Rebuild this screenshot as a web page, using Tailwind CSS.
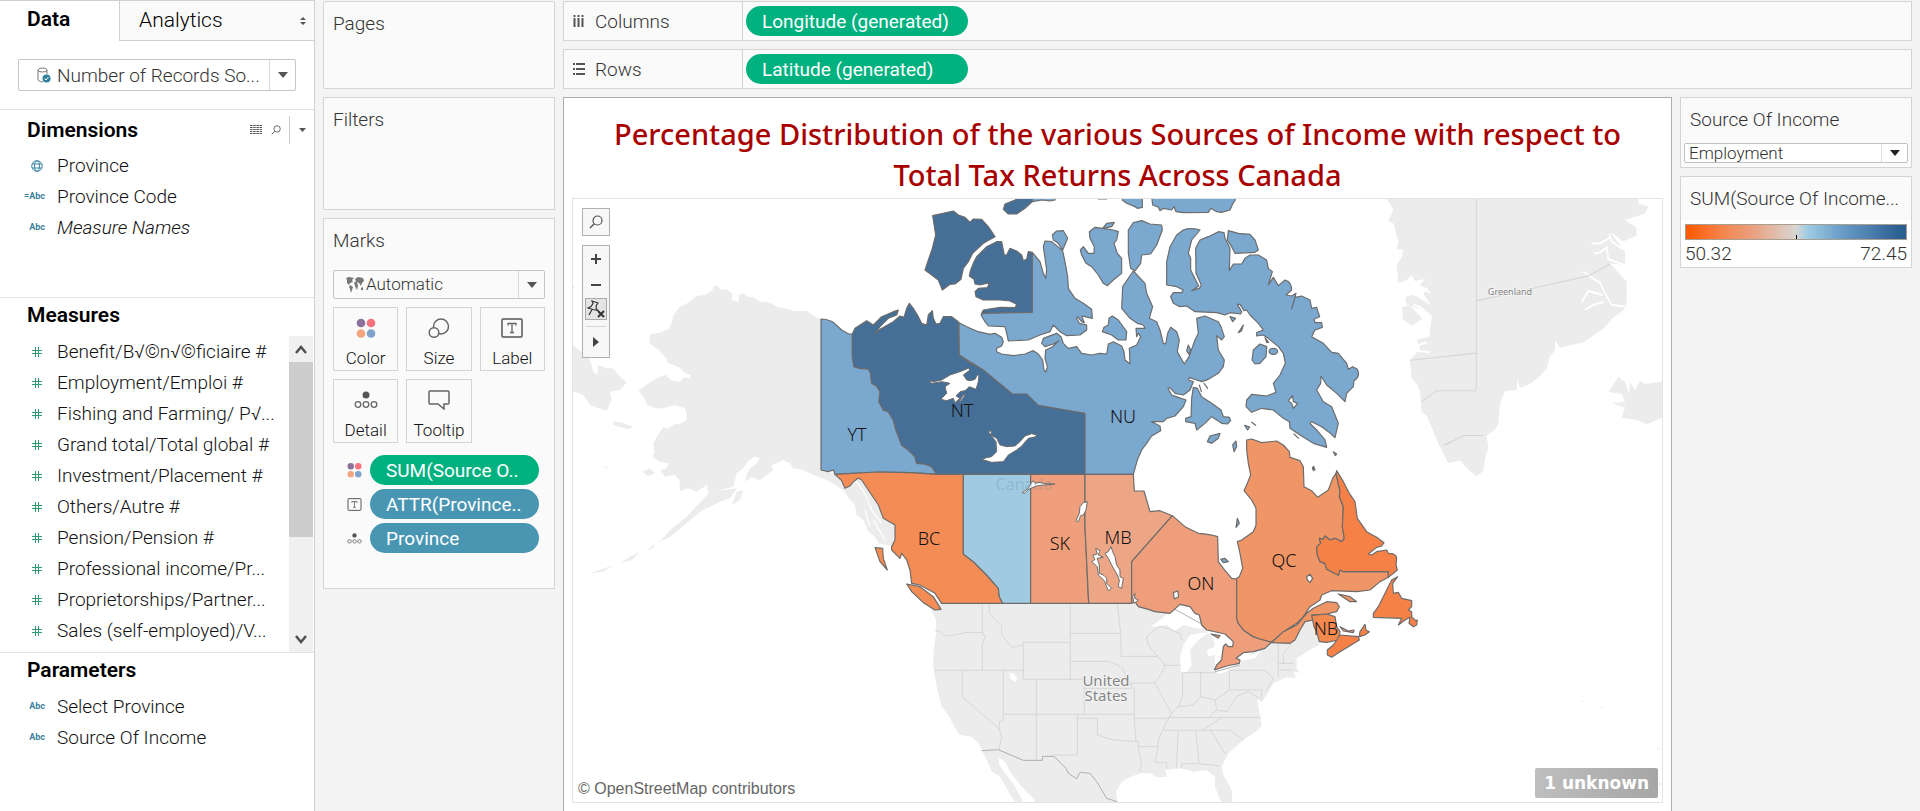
<!DOCTYPE html>
<html lang="en">
<head>
<meta charset="utf-8">
<title>Income sources by province</title>
<script src="https://cdn.jsdelivr.net/npm/@tailwindcss/browser@4"></script>
</head>
<body class="bg-[#f4f4f4] font-['Roboto',sans-serif] text-[19px] leading-[27px] font-light text-[#111]">
<svg class="hidden" aria-hidden="true">
  <symbol id="hash" viewBox="0 0 10 10"><path d="M3.5 0V10M6.5 0V10M0 3.5H10M0 6.5H10" fill="none" stroke="#2f9a72" stroke-width="1"/></symbol>
  <symbol id="dots4" viewBox="0 0 20 20"><circle cx="5" cy="5" r="4.3" fill="#8a7199"/><circle cx="15" cy="5" r="4.3" fill="#f7727f"/><circle cx="5" cy="15.500" r="4.300" fill="#f2a57c"/><circle cx="15" cy="15.500" r="4.300" fill="#7fa3cc"/></symbol>
  <symbol id="label" viewBox="0 0 22 20"><rect x="1" y="1" width="20" height="18" rx="1" fill="none" stroke="#555" stroke-width="1.500"/><path d="M7 7.500V5.500H15V7.500M11 5.500V14.500M9 14.500H13" fill="none" stroke="#666" stroke-width="1.300"/></symbol>
  <symbol id="detail" viewBox="0 0 24 18"><circle cx="12" cy="4" r="3.500" fill="#555"/><g fill="none" stroke="#666" stroke-width="1.300"><circle cx="4" cy="13.500" r="2.800"/><circle cx="12" cy="13.500" r="2.800"/><circle cx="20" cy="13.500" r="2.800"/></g></symbol>
  <symbol id="lens" viewBox="0 0 14 14"><circle cx="8.500" cy="5.500" r="4.500" fill="none" stroke="#555" stroke-width="1.200"/><path d="M5.300 8.700L1 13" stroke="#555" stroke-width="1.400"/></symbol>
</svg>
<div class="flex h-screen overflow-hidden">

  <aside class="flex w-[315px] shrink-0 flex-col border-r border-[#d0d0d0] bg-white">
    <div class="flex h-[41px] shrink-0">
      <button class="w-[119px] border-t border-[#d0d0d0] pb-1 pl-[27px] text-left text-[21px] font-semibold text-black">Data</button>
      <button class="flex flex-1 items-center border border-r-0 border-[#d0d0d0] bg-[#fafafa] pr-2 pl-[19px] text-left text-[21px] font-light text-black"><span class="flex-1">Analytics</span>
        <svg class="h-2 w-[6px]" viewBox="0 0 6 8"><path d="M0 3L3 0L6 3ZM0 5L3 8L6 5Z" fill="#555"/></svg></button>
    </div>
    <div class="flex h-[69px] shrink-0 items-start border-b border-[#e2e2e2] px-[18px] pt-[18px]">
      <button class="flex h-8 w-full items-center rounded-xs border border-[#c6c6c6] text-[#333]">
        <svg class="ml-[18px] h-4 w-[14px] shrink-0" viewBox="0 0 14 16"><path d="M1 3V13Q3 15 6 15M10 3V7M1 3A4.500 2 0 0 1 10 3A4.500 2 0 0 1 1 3" fill="none" stroke="#777"/><circle cx="9.500" cy="11.500" r="4" fill="#2f7f9f"/><path d="M7.500 11.500L9 13L11.500 10" fill="none" stroke="#fff"/></svg>
        <span class="ml-[6px] flex-1 text-left whitespace-nowrap">Number of Records So...</span>
        <span class="flex h-full w-[26px] items-center justify-center border-l border-[#d8d8d8]"><svg class="h-[6px] w-[10px]" viewBox="0 0 10 6"><path d="M0 0H10L5 6Z" fill="#555"/></svg></span>
      </button>
    </div>
    <section class="h-[188px] shrink-0 border-b border-[#e2e2e2]">
      <div class="flex h-[40px] items-center pl-[27px]">
        <h2 class="flex-1 text-[21px] font-semibold text-black">Dimensions</h2>
        <button class="mr-[9px]" aria-label="View as table"><svg class="block h-[10px] w-3" viewBox="0 0 12 10"><path d="M0 .5H12M0 2.500H12M0 4.500H12M0 6.500H12M0 8.500H12" stroke="#555" stroke-dasharray="2.500 .7"/></svg></button>
        <button class="mr-2" aria-label="Search"><svg class="block h-[10px] w-[10px]"><use href="#lens"/></svg></button>
        <button class="flex h-7 w-[25px] items-center justify-center border-l border-[#ccc]" aria-label="Menu"><svg class="h-1 w-[7px]" viewBox="0 0 7 4"><path d="M0 0H7L3.500 4Z" fill="#555"/></svg></button>
      </div>
      <ul>
        <li class="flex h-[31px] items-center"><span class="flex w-[57px] justify-center pl-4"><svg class="h-3 w-3" viewBox="0 0 12 12"><g fill="none" stroke="#3c87a6"><circle cx="6" cy="6" r="5.300"/><ellipse cx="6" cy="6" rx="2.500" ry="5.300"/><path d="M1 4H11M1 8H11"/></g></svg></span>Province</li>
        <li class="flex h-[31px] items-center"><span class="w-[57px] pr-3 text-right text-[9px] font-bold text-[#3c7f9c]">=Abc</span>Province Code</li>
        <li class="flex h-[31px] items-center"><span class="w-[57px] pr-3 text-right text-[9px] font-bold text-[#3c7f9c]">Abc</span><i>Measure Names</i></li>
      </ul>
    </section>
    <section class="flex h-[355px] shrink-0 flex-col border-b border-[#e2e2e2]">
      <h2 class="h-[38px] shrink-0 pt-1 pl-[27px] text-[21px] font-semibold text-black">Measures</h2>
      <div class="flex flex-1">
        <ul class="flex-1 whitespace-nowrap">
          <li class="flex h-[31px] items-center"><svg class="mr-[15px] ml-8 h-[10px] w-[10px]"><use href="#hash"/></svg>Benefit/B√©n√©ficiaire #</li>
          <li class="flex h-[31px] items-center"><svg class="mr-[15px] ml-8 h-[10px] w-[10px]"><use href="#hash"/></svg>Employment/Emploi #</li>
          <li class="flex h-[31px] items-center"><svg class="mr-[15px] ml-8 h-[10px] w-[10px]"><use href="#hash"/></svg>Fishing and Farming/ P√...</li>
          <li class="flex h-[31px] items-center"><svg class="mr-[15px] ml-8 h-[10px] w-[10px]"><use href="#hash"/></svg>Grand total/Total global #</li>
          <li class="flex h-[31px] items-center"><svg class="mr-[15px] ml-8 h-[10px] w-[10px]"><use href="#hash"/></svg>Investment/Placement #</li>
          <li class="flex h-[31px] items-center"><svg class="mr-[15px] ml-8 h-[10px] w-[10px]"><use href="#hash"/></svg>Others/Autre #</li>
          <li class="flex h-[31px] items-center"><svg class="mr-[15px] ml-8 h-[10px] w-[10px]"><use href="#hash"/></svg>Pension/Pension #</li>
          <li class="flex h-[31px] items-center"><svg class="mr-[15px] ml-8 h-[10px] w-[10px]"><use href="#hash"/></svg>Professional income/Pr...</li>
          <li class="flex h-[31px] items-center"><svg class="mr-[15px] ml-8 h-[10px] w-[10px]"><use href="#hash"/></svg>Proprietorships/Partner...</li>
          <li class="flex h-[31px] items-center"><svg class="mr-[15px] ml-8 h-[10px] w-[10px]"><use href="#hash"/></svg>Sales (self-employed)/V...</li>
        </ul>
        <div class="mr-[1px] flex w-6 flex-col items-center bg-[#f0f0f0]">
          <button class="flex h-[26px] shrink-0 items-center" aria-label="Scroll up"><svg class="h-[9px] w-3" viewBox="0 0 12 9"><path d="M1 8L6 2L11 8" fill="none" stroke="#505050" stroke-width="2.500"/></svg></button>
          <div class="h-[175px] w-full bg-[#cdcdcd]"></div>
          <button class="mt-auto flex h-[26px] shrink-0 items-center" aria-label="Scroll down"><svg class="h-[9px] w-3" viewBox="0 0 12 9"><path d="M1 1L6 7L11 1" fill="none" stroke="#505050" stroke-width="2.500"/></svg></button>
        </div>
      </div>
    </section>
    <section>
      <h2 class="h-[38px] pt-1 pl-[27px] text-[21px] font-semibold text-black">Parameters</h2>
      <ul>
        <li class="flex h-[31px] items-center"><span class="w-[57px] pr-3 text-right text-[9px] font-bold text-[#3c7f9c]">Abc</span>Select Province</li>
        <li class="flex h-[31px] items-center"><span class="w-[57px] pr-3 text-right text-[9px] font-bold text-[#3c7f9c]">Abc</span>Source Of Income</li>
      </ul>
    </section>
  </aside>

  <div class="flex w-[248px] shrink-0 flex-col gap-2 px-2 pt-[1px] text-[#333]">
    <section class="h-[88px] rounded-xs border border-[#d4d4d4] bg-[#fafafa] px-[9px] pt-2">Pages</section>
    <section class="h-[113px] border border-[#d4d4d4] bg-[#fafafa] px-[9px] pt-2">Filters</section>
    <section class="h-[371px] border border-[#d4d4d4] bg-[#fafafa] px-[9px] pt-2">
      <h2>Marks</h2>
      <button class="mt-4 flex h-[29px] w-full items-center rounded-xs border border-[#c6c6c6] text-[17px]">
        <svg class="mr-[2px] ml-3 h-4 w-[18px]" viewBox="0 0 18 16"><path d="M0 1L3 0L8 1L6 3L7 5L4 6L3 8L1 6L1 3ZM4 8L7 10L6 13L5 16L4 12L3 10ZM9 2L12 0L17 1L18 4L16 6L15 9L13 6L11 5L12 9L11 13L9 9L8 6L10 4ZM15 11L17 10L17 13L15 13Z" fill="#777"/></svg>
        <span class="flex-1 text-left">Automatic</span>
        <span class="flex h-full w-[26px] items-center justify-center border-l border-[#d8d8d8]"><svg class="h-[6px] w-[10px]" viewBox="0 0 10 6"><path d="M0 0H10L5 6Z" fill="#555"/></svg></span>
      </button>
      <div class="mt-2 grid grid-cols-3 gap-2 text-[17px] text-[#111]">
        <button class="flex h-16 flex-col items-center border border-[#d4d4d4] pt-[10px]"><svg class="h-5 w-5 shrink-0"><use href="#dots4"/></svg><span class="mt-2 leading-6">Color</span></button>
        <button class="flex h-16 flex-col items-center border border-[#d4d4d4] pt-[10px]"><svg class="h-5 w-[22px] shrink-0" viewBox="0 0 22 20"><g fill="#fafafa" stroke="#666" stroke-width="1.500"><circle cx="13" cy="8.500" r="7.500"/><circle cx="6" cy="14.500" r="4.800"/></g></svg><span class="mt-2 leading-6">Size</span></button>
        <button class="flex h-16 flex-col items-center border border-[#d4d4d4] pt-[10px]"><svg class="h-5 w-[22px] shrink-0"><use href="#label"/></svg><span class="mt-2 leading-6">Label</span></button>
        <button class="flex h-16 flex-col items-center border border-[#d4d4d4] pt-[10px]"><svg class="h-5 w-6 shrink-0"><use href="#detail"/></svg><span class="mt-2 leading-6">Detail</span></button>
        <button class="flex h-16 flex-col items-center border border-[#d4d4d4] pt-[10px]"><svg class="h-5 w-[22px] shrink-0" viewBox="0 0 22 20"><path d="M2 1H20Q21 1 21 2V13Q21 14 20 14H16V19L10 14H2Q1 14 1 13V2Q1 1 2 1Z" fill="none" stroke="#666" stroke-width="1.500"/></svg><span class="mt-2 leading-6">Tooltip</span></button>
      </div>
      <ul class="mt-3 flex flex-col gap-1 pr-[6px] pl-[14px] font-normal text-white">
        <li class="flex items-center gap-2"><svg class="h-4 w-[15px]"><use href="#dots4"/></svg><button class="h-[30px] flex-1 rounded-full bg-[#00b180] pl-4 text-left">SUM(Source O..</button></li>
        <li class="flex items-center gap-2"><svg class="h-[13px] w-[15px]"><use href="#label"/></svg><button class="h-[30px] flex-1 rounded-full bg-[#4996b2] pl-4 text-left">ATTR(Province..</button></li>
        <li class="flex items-center gap-2"><svg class="h-[13px] w-[15px]"><use href="#detail"/></svg><button class="h-[30px] flex-1 rounded-full bg-[#4996b2] pl-4 text-left">Province</button></li>
      </ul>
    </section>
  </div>

  <main class="flex min-w-0 flex-1 flex-col gap-2 pt-[1px] pr-2">
    <div class="flex h-10 shrink-0 border border-[#d4d4d4] bg-[#fafafa] text-[#333]">
      <div class="flex w-[179px] items-center border-r border-[#d4d4d4] pl-[9px]"><svg class="mr-[11px] h-3 w-[11px]" viewBox="0 0 11 12"><path d="M1.500 3V12M5.500 3V12M9.500 3V12M1.500 0V2M5.500 0V2M9.500 0V2" stroke="#555" stroke-width="2"/></svg>Columns</div>
      <button class="mt-1 ml-[3px] h-[30px] w-[222px] rounded-full bg-[#00b180] pl-4 text-left font-normal text-white">Longitude (generated)</button>
    </div>
    <div class="flex h-10 shrink-0 border border-[#d4d4d4] bg-[#fafafa] text-[#333]">
      <div class="flex w-[179px] items-center border-r border-[#d4d4d4] pl-[9px]"><svg class="mr-[10px] h-3 w-3" viewBox="0 0 12 12"><path d="M3 1H12M3 6H12M3 11H12M0 1H2M0 6H2M0 11H2" stroke="#555" stroke-width="2"/></svg>Rows</div>
      <button class="mt-1 ml-[3px] h-[30px] w-[222px] rounded-full bg-[#00b180] pl-4 text-left font-normal text-white">Latitude (generated)</button>
    </div>

    <div class="flex min-h-0 flex-1 gap-2">
      <section class="flex min-w-0 flex-1 flex-col border border-b-0 border-[#adadad] bg-white px-2 pb-2">
        <h1 class="px-8 pt-[15px] pb-[3px] text-center font-['Noto_Sans',sans-serif] text-[29px] leading-[41px] font-medium text-[#a80000]">Percentage Distribution of the various Sources of Income with respect to Total Tax Returns Across Canada</h1>
        <div class="relative min-h-0 flex-1 overflow-hidden border border-[#e3e3e3]">
          <svg class="absolute inset-0 h-full w-full" viewBox="573 199 1089 603" preserveAspectRatio="xMidYMid slice" role="img" aria-label="Map of Canada coloured by province">
            <!-- Uncoloured base land -->
            <g fill="#ececec">
              <g transform="translate(560 190) scale(.33333)">
                <path d="M783 387L765 380 740 362 715 364 700 362 680 357 650 350 630 338 600 335 580 322 560 320 552 308 538 316 535 335 515 330 518 312 500 298 485 300 466 284 455 303 435 315 410 317 385 338 360 350 340 375 335 400 325 418 300 428 270 432 268 460 300 483 318 505 325 520 355 530 375 548 392 555 390 565 370 563 360 575 335 572 318 555 300 560 265 580 236 602 250 620 262 645 285 655 310 655 345 645 375 655 380 670 380 690 365 700 345 702 325 715 310 712 290 740 280 760 283 790 275 800 300 815 325 820 320 835 300 840 315 860 345 855 358 870 360 903 385 895 410 905 440 885 450 925 480 900 520 890 530 850 550 835 565 812 585 800 600 805 590 820 570 835 560 855 555 875 575 862 600 870 620 855 640 840 635 825 650 820 670 810 690 820 700 835 730 840 760 855 800 870 850 900 870 930 885 945 890 975 910 990 925 1025 945 1040 955 1060 980 1065 1005 1070 1010 1010 970 985 930 900 895 860 830 853 783 840Z"/>
                <path d="M38 465L70 490 90 510 100 545 112 555 115 525 140 535 160 535 180 560 200 577 180 600 150 605 155 630 140 662 115 655 90 645 70 615 45 605 38 608ZM160 695L185 697 220 712 200 717 160 705ZM247 845L270 835 285 850 265 858ZM38 285L44 292 38 300ZM135 825L145 835 138 835Z"/>
                <path d="M450 905L530 895 510 925 480 935 420 965 380 1000 330 1040 300 1055 330 1020 380 980ZM530 905L550 900 540 930 515 945ZM260 1080L285 1062 280 1075ZM180 1120L210 1100 240 1085 215 1110ZM85 1150L120 1140 160 1125 130 1145Z"/>
                <path d="M885 870L915 910 935 960 965 1000M915 960L930 1010M940 990L975 1050" fill="none" stroke="#fff" stroke-width="4"/>
              </g>
              <path transform="translate(900 590) scale(.33333)" d="M92 55L108 90 108 130 100 190 100 235 112 300 125 350 145 375 160 405 180 435 215 440 235 460 245 480 265 520 275 545 300 560 345 637 370 637 345 590 320 555 297 525 297 503 315 515 330 545 365 590 405 630 400 640 652 640 648 605 665 575 690 562 720 550 750 550 770 562 800 560 795 540 840 535 880 545 920 540 945 560 945 590 965 640 998 640 995 600 970 555 965 530 985 490 1030 450 1075 420 1085 405 1080 375 1075 345 1090 330 1100 315 1120 280 1160 262 1188 265 1180 245 1200 248 1190 235 1190 205 1220 185 1258 165 1250 80 1170 60 900 20 100 35Z"/>
              <g transform="translate(1370 190) scale(.33333 .396)">
                <path d="M50 22L60 35 70 50 55 78 72 85 75 100 85 130 80 150 100 150 95 170 80 190 85 235 110 228 125 215 135 230 165 225 150 240 175 250 160 262 182 290 130 265 105 270 110 290 150 300 185 320 178 370 140 378 150 400 120 430 125 475 140 490 150 510 155 560 170 570 185 600 205 640 235 690 270 683 300 710 320 722 340 710 345 680 355 650 350 620 375 605 385 590 390 540 405 508 440 505 443 478 450 500 480 490 510 470 530 450 540 420 555 405 555 380 570 398 640 385 700 350 730 322 762 303 770 285 770 232 720 185 765 190 765 155 720 105 760 130 800 115 800 95 765 75 825 60 835 42 805 35 805 22ZM97 295L120 292 158 325 125 343 98 325Z"/>
                <path d="M877 483L850 487 825 490 810 482 795 505 780 485 778 515 765 485 745 472 715 510 755 515 765 535 725 538 765 550 755 575 800 580 830 592 877 575ZM635 1290h6v2h-6ZM690 1305h10v2h-10ZM655 1286h6v2h-6ZM862 1410h8v3h-8ZM868 1498h9v4h-9Z"/>
                <path d="M765 295L725 290 708 265 690 235 660 218 640 207M700 283L670 290 645 302M698 265L655 255 635 283M765 190L715 175 710 145 690 158 672 160M720 120L690 135 665 135M185 320L150 295 130 290M180 260L150 245 125 240M170 385L130 395M180 410L130 405M760 150L725 130 718 110" fill="none" stroke="#fff" stroke-width="5"/>
              </g>
            </g>
            <!-- Lakes cut out of the base land, then state and national borders -->
            <g transform="translate(900 590) scale(.33333)">
              <path fill="#fff" d="M752 110L780 90 810 65 845 43 880 50 905 95 925 118 885 115 850 105 825 122 800 105 775 110ZM905 128L870 135 850 165 840 200 843 245 860 248 875 225 870 180 895 150 925 128ZM905 110L960 125 1000 140 1000 172 970 165 960 210 945 235 945 195 925 200 920 180 945 170 940 145ZM935 240L960 252 1000 235 1022 225 1020 205 960 225ZM1005 205L1020 190 1065 180 1080 185 1065 205 1020 214ZM328 248L340 250 352 265 345 277 330 265ZM1072 330L1080 375 1084 345 1080 325Z"/>
              <path fill="none" stroke="#d3d3d3" stroke-width="2.500" d="M247 42V127L255 140 247 160V241M105 122L120 125 135 138 165 135 195 128 250 127M268 42V70L305 110V135L335 172 370 165M370 157H511M511 42V268M370 157V268H553V373M511 130H663M652 42L662 130 664 200M664 199H773M511 214H625L665 230 690 280 703 300V385L708 455M105 241H370M187 241V320L298 418M310 241V373H703M409 268V510M553 295H695M310 373L308 395H298V418L305 440 297 480M532 373V495H460M532 385H592V435L640 450 715 455M690 280L765 278M703 385H800M715 455L717 490 725 520 718 545M717 470H775M773 199L795 225 785 250 765 278 790 325 815 370 800 395 775 450V470L765 518H800V535M780 108L740 140 745 165 773 199M780 108L840 130 845 150M790 226H840M848 248V320L835 350 815 370M848 248H945M902 248V320M835 350L880 345 902 320 945 330 950 360 925 382M800 383L1082 382M793 421H935M835 421L829 535M887 421L897 518M845 535V521H897L960 528M975 490L932 421H990L1030 450M965 382L912 418M988 241V300H1085V325M988 241H1095L1120 265 1100 300M945 330L988 300M950 360L980 365 1010 320 1045 305 1085 330M1135 160V260M1175 160L1150 190V220M1135 220H1180M1135 240H1180M1115 160L1050 195"/>
              <path fill="none" stroke="#aeaeae" stroke-width="3" d="M245 482L295 479 370 511H427V499H462L498 535 505 550 530 566 540 547 570 550 590 575 605 600 620 625 652 635M825 58L905 102M945 245L1020 225"/>
            </g>
            <path transform="translate(1370 190) scale(.33333 .396)" fill="none" stroke="#d6d6d6" stroke-width="3" d="M319 22V503M319 280L655 217 720 187M120 430L319 412M155 535L200 507H319M222 645L282 620H340"/>

            <g stroke="#6b6b6b" stroke-width="3.500" stroke-linejoin="round">
              <!-- Yukon and Northwest Territories -->
              <g transform="translate(560 190) scale(.33333)">
                <path fill="#7ba8cf" d="M783 387Q805 388 820 397L845 420 866 432H877V500L882 530 900 535 925 537 932 550 935 580 950 588 960 605 957 635 970 660 985 665 1000 690 1008 720 1025 765 1045 780 1065 800 1070 820 1095 822 1115 830 1130 852 1050 848 960 846 880 850 825 853 820 840 805 845 783 840Z"/>
                <path fill="#466f98" d="M877 432L885 415 920 392 940 405 965 380 1000 365 1015 360 1010 375 985 385 960 410 945 432 960 418 1000 395 1020 378 1032 382 1040 355 1048 340 1060 355 1075 380 1085 400 1100 405 1105 375 1117 362 1120 385 1128 402 1140 400 1150 380 1175 380 1195 395 1198 495 1225 515 1270 540 1320 580 1357 610H1400L1435 646 1500 655 1575 670V853H1130L1115 830 1095 822 1070 820 1065 800 1045 780 1025 765 1008 720 1000 690 985 665 970 660 957 635 960 605 950 588 935 580 932 550 925 537 900 535 882 530 877 500Z"/>
              </g>
              <g transform="translate(900 190) scale(.33333)">
                <g fill="#466f98">
                  <path d="M98 77L160 63 175 75 195 82 210 97 220 87 245 88 265 110 285 140 250 160 218 190 205 215 190 235 183 268 165 282 150 283 127 300 115 270 95 255 75 240 85 210 97 175 107 135Z"/>
                  <path d="M290 155L305 155 313 195 320 195 330 175 350 183 365 195 370 212 380 208 385 185 397 187V367L345 369 340 377 335 369 260 370 258 385 245 370 250 360 300 352 345 353 350 343 330 333 300 330 250 330 228 320 225 305 235 295 262 293 268 278 240 285 225 282 222 268 208 258 212 240 222 215 230 200 260 170Z"/>
                  <path d="M397 20V35L375 55 350 72H325L310 58 315 42 345 30 365 20Z"/>
                </g>
                <!-- Nunavut: western islands and the mainland -->
                <g fill="#7ba8cf">
                  <path d="M397 20H465V30L450 33 425 30 397 35ZM667 20V30L680 40 705 50 712 55 727 52V20ZM595 20V27H620V20Z"/>
                  <path d="M397 187L420 215 430 250 437 265 440 240 430 170 435 153 455 155 480 175 488 183 495 215 503 260 505 295 525 325 550 340 575 358 577 385 555 380 545 378 553 398 545 395 532 380 530 385 538 400 560 405V420L540 435 500 437 480 425 460 405 450 425 420 435 385 450 325 453 320 430 315 410 265 408 255 395 243 375 250 370 397 367Z"/>
                  <path d="M457 135L470 123 490 122 503 145 488 180 475 160 460 150Z"/>
                  <path d="M568 125L585 112 608 115 640 120 655 125 650 150 642 160 652 190 665 205V250L640 270 622 287 610 280 595 255 575 230 558 220 545 195 541 180 550 170 565 190 582 190 583 170 570 145ZM608 115L620 100 643 97 635 110Z"/>
                  <path d="M685 120L700 98 725 92 750 102 785 105 787 120 770 165 752 192 725 195 722 220 705 243 692 235 685 190Z"/>
                  <path d="M637 378L655 390 680 425 678 450 655 450 635 435 607 425 612 412 625 405 627 385Z"/>
                  <path d="M177 398L200 410 235 425 270 433 285 430 305 442 310 455 305 468 290 475V485L305 492 340 497 375 492 400 482 415 492 428 510 432 540 438 546 442 530 435 505 437 480 455 472 477 452 460 462 435 470 425 460 430 445 470 430 483 440 490 460 505 475 530 470 545 490 575 495 600 490 620 492 625 462 640 455 665 468 672 485 675 510 690 522 688 475 710 465 722 440 715 430 710 440 708 415 735 415 730 405 712 400 690 385 665 355 668 290 700 243 735 280 740 310 758 350 748 385 770 395 780 420 790 460 797 462 803 430 812 412 830 425 838 450 832 485 853 522 867 500 885 450 895 430 890 385 915 378 955 395 963 410 973 440 965 450 950 437 955 480 973 510 970 530 955 550 925 568 905 575 890 570 868 563 865 570 880 575 870 600 850 615 825 610 810 593 804 595 815 615 835 622 858 630 850 650 825 678 800 685 790 695 755 695 780 708 782 722 755 738 740 760 725 780 712 810 700 853H555V670L415 646 380 612H337L250 540 178 495Z"/>
                </g>
              </g>
              <!-- Nunavut: Baffin Island and its neighbours -->
              <g transform="translate(1150 190) scale(.33333)" fill="#7ba8cf">
                <path d="M5 20L8 45 25 52 30 62 40 55 65 60 72 50 78 65 100 68 175 67 182 55 200 65 215 67 240 60 248 42 256 30 252 20Z"/>
                <path d="M150 120Q120 112 100 120L80 135 60 170 50 215 50 285 80 290 100 300 95 308 70 308 62 320 70 340 90 350 110 348 135 365 200 368 225 375 240 368 272 372 275 365 262 343 270 343 282 362 290 360 300 375 325 400 340 420 320 428V438L340 435 355 445 385 470 400 490 406 520 390 555 370 580 378 607 350 618 305 613 290 630 288 650 305 667 335 655 370 660 400 685 418 695 420 715 450 735 490 760 530 772 525 750 500 720 480 700 485 695 515 710 535 725 555 743 565 700 545 650 520 635 500 600 512 580 513 558 530 585 560 610 585 635 590 610 610 590 612 572Q632 560 622 538L608 530 595 538 590 520 565 490 545 487 520 460 485 440 495 420 517 412 515 398 495 398 492 388 509 380 500 352 485 355 480 330 455 318 435 322 425 357 438 310 425 318 408 315 425 300Q425 275 405 270L385 287 370 262 355 285 367 245 355 235 350 210 325 195 300 195 285 205 275 222 250 222 238 242 240 175 225 145 222 128 205 125 175 140 150 150 137 175 138 250 154 285 148 295 125 302 146 288 122 240V205L115 190 125 150Z"/>
                <path d="M235 122L265 130 300 133 315 150 325 180 315 187 255 190 245 170 232 150ZM130 592L142 595 155 620 185 640 213 660 220 680 238 682 242 692 232 702 215 700 200 690 185 680 165 700 140 720 135 700 107 695V685L123 680 125 625ZM172 755L180 738 210 730 205 745 185 760ZM248 765L258 753 260 770 252 785ZM310 480L330 462 350 470 348 500 330 520 315 522 306 510Z"/>
                <ellipse cx="370" cy="484" rx="13" ry="9"/>
                <path d="M240 380L257 385 248 395ZM265 428L280 405 275 422ZM115 465L122 480 117 493 110 482ZM345 443L356 457 350 457ZM284 706L299 711 293 720ZM305 697L317 706ZM550 785L560 792 556 797ZM432 732L446 745ZM487 836L491 829 495 840ZM148 585L154 605ZM162 580L173 595Z"/>
                <path fill="#fff" d="M415 632L428 617 430 635 443 640 430 655 425 640Z"/>
              </g>
              <!-- British Columbia to Manitoba -->
              <g transform="translate(810 450) scale(.33333)">
                <path fill="#f48c56" d="M75 73L200 66 300 68 380 73H460V312L490 335 530 375 565 415 568 440 578 460H395L375 430 330 405 305 400 300 360 290 330 275 310 270 325 245 300V290L255 270V225L220 205 205 165 185 135 155 90 145 84 130 95 120 108 105 115 95 92ZM290 402L330 410 370 440 393 478 375 480 340 458 305 425ZM195 293L218 295 220 325 232 360 210 335Z"/>
                <path fill="#a0cae2" d="M460 73H662V460H578L568 440 565 415 530 375 490 335 460 312Z"/>
                <path fill="#ef9f7b" d="M662 73H825V230L836 460H662Z"/>
                <path fill="#eca685" d="M825 73H970L973 123H1002L1020 185 1050 182 1087 197 965 335V460H836L825 230Z"/>
              </g>
              <!-- Ontario to the Atlantic -->
              <g transform="translate(1110 430) scale(.33333)">
                <path fill="#ee9e7a" d="M187 257L225 290 265 310Q300 312 323 320L325 395 340 415 365 445 380 447V565L385 580 400 600 430 620 450 627 485 636 465 655 430 665 400 668 378 685 390 690 388 700 350 708 313 720 320 705 335 690 340 650 347 642 355 650 368 650 370 635 345 612 290 600 275 585 268 555 255 550 240 530 210 523 180 550 160 548 135 545 115 538 85 530 75 515 65 520V395Z"/>
                <path fill="#f09566" d="M410 30L425 27 455 38 500 33 520 45 538 65 540 82 570 92 580 110 582 170 605 182 623 202 655 180 668 145 678 130 690 185 688 200 700 230 697 290 703 325 695 335 675 325 660 330 645 318 640 328 628 325 632 340 620 350 622 375 630 395 645 400 650 418 685 436 690 420 700 425H835V442L810 455 780 480 740 485 665 482 635 495 630 510 600 530 580 560 560 580 520 605 485 636 450 627 430 620 400 600 385 580 380 565V445L388 440 398 415 390 370 382 335 395 330 430 305 438 285 438 235 425 210 402 182 412 160 422 135 415 100 410 60ZM485 638L540 640 555 630 570 600 585 575 610 570 605 555 650 552 680 545 688 530 680 518 650 515 610 535 590 550 560 585 520 605ZM685 492L720 500 740 515 720 515Z"/>
                <path fill="#f68147" d="M680 122L700 155 718 190 735 215 742 265 770 305 800 322 822 338 815 348 800 352 775 372 785 375 800 365 830 360 835 370Q860 370 860 385L858 405 862 420 835 442V425H700L690 420 685 436 650 418 645 400 630 395 622 375 620 350 632 340 628 325 640 328 645 318 660 330 675 325 695 335 703 325 697 290 700 230 688 200 690 185 678 130ZM863 440L848 460 850 490 865 487 875 505 905 512V530L895 540 905 545 905 560 917 572 922 570 920 585 910 590 897 580 900 562 885 570 865 585 875 565 790 562V550L805 530 830 480 845 450Z"/>
                <path fill="#f3894f" d="M605 556L650 552 675 560 680 590 690 605 685 630 650 637 628 635 620 605 612 590Z"/>
                <path fill="#f68147" d="M690 615L745 620 748 630 715 650 690 665 665 682 652 675V660L670 645ZM765 583L768 600 778 605 765 615 748 620 750 605Z"/>
                <path fill="#f09566" d="M690 590L715 603 732 600 730 608 700 603ZM303 612L330 617 325 624Z"/>
                <path fill="#7ba8cf" d="M382 265L388 280 378 292ZM332 388L345 385 355 395 340 398ZM608 112L614 117 610 122Z"/>
                <path fill="#fff" d="M590 440L600 433 608 445 600 458 592 450ZM190 488L203 483 206 500 193 507Z"/>
              </g>
              <!-- Inland lakes -->
              <g fill="#fff" stroke-width="3">
                <path transform="translate(900 190) scale(.33333)" d="M88 572L100 575 125 570 150 555 180 545 205 535 210 540 190 555 200 570 212 572 225 568 232 555 237 555 235 575 228 598 208 590 195 602 180 605 168 618 180 625 165 638 160 625 140 632 122 628 140 610 135 590 150 580 125 575 95 580ZM190 615L197 612 185 630 175 638ZM265 725L275 722 272 735 290 745 300 765 320 770 345 768 360 755 375 738 395 731 410 735 405 741 385 745 365 768 350 780 325 795 310 815 275 817 245 808 260 803 275 800 290 785 288 755Z"/>
                <path transform="translate(810 450) scale(.33333)" d="M637 128L655 115 663 100 670 92 675 100 690 97 705 101 735 102 700 105 680 108 655 118 645 130ZM820 158L832 155 828 180 820 195 812 197 805 215 798 212 808 190 810 170ZM885 310L895 305 903 290 908 305 915 320 920 345 930 360 930 380 940 385 935 415 925 410 928 390 922 375 905 345 895 325ZM848 316L862 312 857 295 870 302 865 315 880 322 862 325 868 345 868 370 882 376 890 385 890 400 905 415 895 422 888 405 883 392 865 375 862 350 845 335 855 328ZM968 440L975 430 974 445 985 450 972 460Z"/>
              </g>
            </g>
            <g font-family="Noto Sans" text-anchor="middle" font-weight="300">
              <text x="1024" y="490" font-size="16" font-weight="400" fill="#5f7f90" fill-opacity=".25">Canada</text>
              <g font-size="18" fill="#111">
                <text x="857" y="441">YT</text><text x="962" y="417">NT</text><text x="1123" y="423">NU</text><text x="929" y="545">BC</text><text x="1060" y="550">SK</text><text x="1118" y="544">MB</text><text x="1201" y="590">ON</text><text x="1284" y="567">QC</text><text x="1326" y="635">NB</text>
              </g>
              <g fill="#858585" stroke="#f3f3f3" stroke-width="2" paint-order="stroke" font-weight="400">
                <text y="686" font-size="15"><tspan x="1106">United</tspan><tspan x="1106" dy="15">States</tspan></text>
                <text x="1510" y="295" font-size="9">Greenland</text>
              </g>
            </g>
          </svg>
          <div class="absolute top-[9px] left-[9px] flex flex-col gap-[9px]">
            <button class="flex h-7 w-7 items-center justify-center border border-[#b0b0b0] bg-[#f7f7f7]" aria-label="Search map"><svg class="h-[14px] w-[14px]"><use href="#lens"/></svg></button>
            <div class="flex h-[113px] flex-col items-center border border-[#b0b0b0] bg-[#f7f7f7]">
              <button class="flex h-[26px] items-center" aria-label="Zoom in"><svg class="h-[10px] w-[10px]" viewBox="0 0 10 10"><path d="M5 0V10M0 5H10" stroke="#444" stroke-width="2"/></svg></button>
              <button class="flex h-[26px] items-center" aria-label="Zoom out"><svg class="h-[10px] w-[10px]" viewBox="0 0 10 10"><path d="M0 5H10" stroke="#444" stroke-width="2"/></svg></button>
              <button class="flex h-[22px] w-[22px] items-center justify-center border border-[#a8a8a8] bg-[#e4e4e4]" aria-label="Reset map"><svg class="h-[18px] w-[18px]" viewBox="0 0 18 18"><path d="M5 1L11 3L9.500 5L9 8L11 10.500L6 9.500L1 8L4 6.500L6 3.500ZM5 9.500L2 15" fill="none" stroke="#333" stroke-width="1.200"/><path d="M11 11L17 17M17 11L11 17" stroke="#333" stroke-width="2"/></svg></button>
              <div class="mt-[6px] h-[1px] w-5 bg-[#d8d8d8]"></div>
              <button class="flex flex-1 items-center" aria-label="Map tools"><svg class="h-[10px] w-[6px]" viewBox="0 0 6 10"><path d="M0 0L6 5L0 10Z" fill="#444"/></svg></button>
            </div>
          </div>
          <a href="#" class="absolute bottom-0 left-[5px] font-['Liberation_Sans',sans-serif] text-[16px] font-normal text-[#666]">© OpenStreetMap contributors</a>
          <button class="absolute right-1 bottom-1 h-[30px] rounded-xs bg-linear-to-r from-[#bebebe] to-[#a6a6a6] px-[9px] font-['DejaVu_Sans',sans-serif] text-[17px] font-bold text-white">1 unknown</button>
        </div>
      </section>

      <aside class="flex w-[232px] shrink-0 flex-col gap-2 text-[#333]">
        <section class="h-[71px] border border-[#d4d4d4] bg-[#fafafa] px-[3px]">
          <label for="source" class="block h-[45px] pt-2 pl-[6px]">Source Of Income</label>
          <div class="relative">
            <select id="source" class="block h-5 w-full appearance-none rounded-xs border border-[#c0c0c0] bg-white pl-1 text-[17px] leading-[18px] font-light"><option>Employment</option></select>
            <span class="pointer-events-none absolute inset-y-[1px] right-[1px] flex w-[26px] items-center justify-center border-l border-[#ddd]"><svg class="h-[6px] w-[10px]" viewBox="0 0 10 6"><path d="M0 0H10L5 6Z" fill="#222"/></svg></span>
          </div>
        </section>
        <section class="h-[92px] border border-[#d4d4d4] bg-white">
          <h2 class="h-[43px] bg-[#fafafa] pt-2 pl-[9px] whitespace-nowrap">SUM(Source Of Income...</h2>
          <div class="px-1 pt-1">
            <div class="flex h-4 items-end justify-center border border-[#a89e92] bg-[linear-gradient(to_right,#ff5800_0%,#f4834a_16%,#e8a78a_33%,#d8d6d3_50%,#a0cde4_55%,#6b9fc9_70%,#2a5d90_98%)]"><span class="h-1 w-[1px] bg-black"></span></div>
            <div class="flex justify-between"><span>50.32</span><span>72.45</span></div>
          </div>
        </section>
      </aside>
    </div>
  </main>
</div>
</body>
</html>
